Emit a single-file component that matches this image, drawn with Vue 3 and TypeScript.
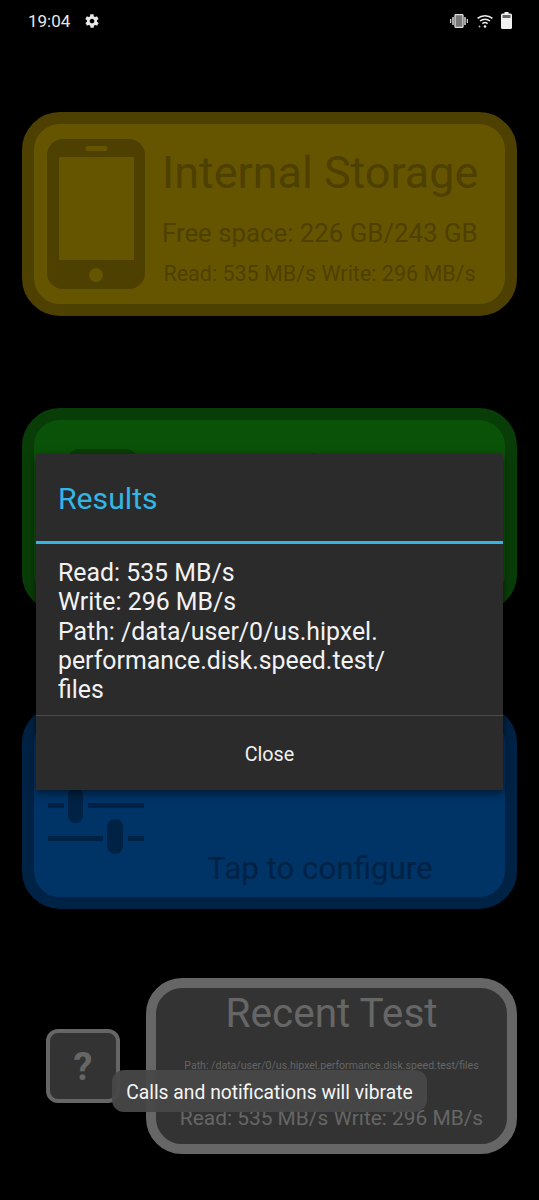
<script setup lang="ts">
const resultLines: string[] = [
  'Read: 535 MB/s',
  'Write: 296 MB/s',
  'Path: /data/user/0/us.hipxel.',
  'performance.disk.speed.test/',
  'files',
]
</script>

<template>
  <div class="page">
    <header class="status">
      <span class="time">19:04</span>
      <svg class="gear" width="16" height="16" viewBox="0 0 24 24"><path fill="#e8e8e8" d="M19.4 13c.1-.3.1-.7.1-1s0-.7-.1-1l2.1-1.6c.2-.1.2-.4.1-.6l-2-3.5c-.1-.2-.4-.3-.6-.2l-2.5 1c-.5-.4-1.1-.7-1.7-1l-.4-2.6c0-.3-.2-.5-.5-.5h-4c-.3 0-.5.2-.5.4l-.4 2.7c-.6.2-1.1.6-1.7 1l-2.5-1c-.2-.1-.5 0-.6.2l-2 3.5c-.1.2-.1.5.1.6L4.600 11c-.1.3-.1.7-.1 1s0 .7.1 1l-2.100 1.600c-.2.1-.2.4-.1.6l2 3.500c.1.2.4.3.6.2l2.500-1c.5.4 1.100.7 1.700 1l.4 2.600c0 .3.2.5.5.5h4c.3 0 .5-.2.5-.4l.4-2.700c.6-.2 1.100-.6 1.700-1l2.500 1c.2.1.5 0 .6-.2l2-3.500c.1-.2.1-.5-.1-.6L19.400 13zM12 15.500c-1.900 0-3.500-1.600-3.500-3.500s1.600-3.500 3.500-3.500 3.500 1.600 3.500 3.500-1.600 3.500-3.500 3.500z"/></svg>
      <span class="spacer"></span>
      <svg class="ic-vib" width="18" height="14" viewBox="0 0 18 14"><path fill="#cfcfcf" d="M0 5h1.300v4H0zM2.200 3h1.600v8H2.200zM14.200 3h1.600v8h-1.600zM16.700 5H18v4h-1.300z"/><rect x="5" y=".6" width="8" height="12.800" rx="1" fill="#777" stroke="#e0e0e0" stroke-width="1.300"/></svg>
      <svg class="ic-wifi" width="16" height="14" viewBox="0 0 16 14"><g fill="none" stroke="#eee" stroke-width="1.500"><path d="M.6 4.400C4.700.7 11.300.7 15.400 4.400"/><path d="M3 7C5.900 4.500 10.100 4.500 13 7"/><path d="M5.400 9.600C6.900 8.400 9.100 8.400 10.600 9.600"/></g><circle cx="8" cy="12.500" r="1.300" fill="#eee"/><circle cx="2.500" cy="12.500" r=".9" fill="#bbb"/></svg>
      <svg class="ic-bat" width="11" height="17" viewBox="0 0 11 17"><path fill="#f0f0f0" d="M3.500 0h4v1.500h2A1.500 1.500 0 0 1 11 3v12.500a1.500 1.500 0 0 1-1.500 1.500h-8A1.500 1.500 0 0 1 0 15.500V3a1.500 1.500 0 0 1 1.500-1.500h2z"/><rect x="1.500" y="3" width="8" height="3" fill="#666"/></svg>
    </header>

    <section class="card yellow">
      <svg class="phone" width="98" height="150" viewBox="0 0 98 150">
        <path fill="#4d4000" fill-rule="evenodd" d="M16 0h66a16 16 0 0 1 16 16v118a16 16 0 0 1-16 16H16a16 16 0 0 1-16-16V16A16 16 0 0 1 16 0zM12 18v103h75V18zM41 7a2.500 2.500 0 0 0 0 5h17a2.500 2.500 0 0 0 0-5zM49 129a7 7 0 1 0 0 14 7 7 0 0 0 0-14z"/>
      </svg>
      <div class="info">
        <h2 class="big">Internal Storage</h2>
        <p class="free">Free space: 226 GB/243 GB</p>
        <p class="speed">Read: 535 MB/s Write: 296 MB/s</p>
      </div>
    </section>

    <section class="card green">
      <div class="sd"></div>
      <div class="info">
        <h2 class="big">External Storage</h2>
      </div>
    </section>

    <section class="card blue">
      <svg class="sliders" width="96" height="100" viewBox="0 0 96 100">
        <g fill="#002244">
          <path d="M0 0h55v5H0zM80 0h16v5H80zM0 33h16v5H0zM40 33h56v5H40zM0 66h55v5H0zM80 66h16v5H80z"/>
          <rect x="59" y="-15" width="16" height="35" rx="8"/>
          <rect x="20" y="18" width="15" height="35" rx="7.500"/>
          <rect x="59" y="49" width="16" height="35" rx="8"/>
        </g>
      </svg>
      <p class="tap">Tap to configure</p>
    </section>

    <div class="bottom">
      <button class="help" type="button">?</button>
      <section class="recent">
        <h2 class="r-title">Recent Test</h2>
        <p class="r-path">Path: /data/user/0/us.hipxel.performance.disk.speed.test/files</p>
        <p class="r-speed">Read: 535 MB/s Write: 296 MB/s</p>
      </section>
    </div>

    <div class="dialog">
      <h1 class="d-title">Results</h1>
      <div class="d-body">
        <div v-for="line in resultLines" :key="line">{{ line }}</div>
      </div>
      <div class="d-action">Close</div>
    </div>

    <div class="toast">Calls and notifications will vibrate</div>
  </div>
</template>

<style>
html, body { margin: 0; background: #000; }
</style>

<style scoped>
.page {
  position: relative;
  width: 539px;
  height: 1200px;
  overflow: hidden;
  background: #000;
  font-family: Roboto, "Liberation Sans", sans-serif;
  display: flex;
  flex-direction: column;
  padding: 0 22px;
  box-sizing: border-box;
}
.status {
  height: 42px;
  margin: 0 -22px 70px;
  padding: 0 27px 0 28px;
  display: flex;
  align-items: center;
}
.time { color: #e8e8e8; font-size: 17px; line-height: 42px; width: 42px; }
.gear { margin-left: 14px; }
.spacer { flex: 1; }
.ic-wifi { margin-left: 9px; }
.ic-bat { margin-left: 8px; margin-top: -1px; }
h1, h2, p { margin: 0; font-weight: 400; }
.card {
  box-sizing: border-box;
  height: 204px;
  border-width: 12px;
  border-style: solid;
  border-radius: 38px;
  display: flex;
  white-space: nowrap;
}
.yellow {
  background: #665500;
  border-color: #4d4000;
  color: #4d4000;
  padding: 15px 0 0 13px;
}
.phone { flex: none; }
.info {
  width: 315px;
  margin-left: 17px;
  text-align: center;
}
.big { font-size: 44.900px; line-height: 50px; margin-top: 9px; }
.free { font-size: 25.800px; line-height: 30px; margin-top: 20px; }
.speed { font-size: 21.500px; line-height: 26px; margin-top: 13px; }
.green {
  margin-top: 92px;
  background: #0b5209;
  border-color: #093d07;
  color: #093d07;
  padding: 18px 0 0 13px;
}
.sd { width: 71px; height: 120px; margin-left: 20px; margin-top: 11px; background: #093d07; border-radius: 12px 12px 0 0; flex: none; margin-right: 4px; }
.green .info { margin-left: 15px; }
.blue {
  margin-top: 93px;
  background: #003366;
  border-color: #002244;
  color: #002244;
  padding: 0 0 0 14px;
}
.sliders { flex: none; overflow: visible; margin-top: 53px; }
.tap { font-size: 31.300px; line-height: 40px; margin: 132px 0 0 61px; width: 230px; text-align: center; }
.bottom {
  display: flex;
  margin-top: 69px;
  align-items: flex-start;
}
.help {
  box-sizing: border-box;
  width: 74px;
  height: 74px;
  margin: 51px 26px 0 24px;
  padding: 0;
  border: 4px solid #666;
  border-radius: 12px;
  background: #333;
  color: #666;
  font: 700 38px/69px Roboto, "Liberation Sans", sans-serif;
  text-align: center;
}
.recent {
  box-sizing: border-box;
  width: 371px;
  height: 176px;
  border: 10px solid #666;
  border-radius: 36px;
  background: #333;
  color: #666;
  text-align: center;
  white-space: nowrap;
}
.r-title { font-size: 40.600px; line-height: 46px; margin-top: 2px; }
.r-path { font-size: 10.570px; line-height: 14px; margin-top: 23px; }
.r-speed { font-size: 20.900px; line-height: 26px; margin-top: 32px; }
.dialog {
  position: absolute;
  left: 36px;
  top: 454px;
  width: 467px;
  height: 336px;
  background: #2b2b2b;
  box-shadow: 0 3px 8px rgba(0, 0, 0, 0.55);
  display: flex;
  flex-direction: column;
}
.d-title {
  box-sizing: border-box;
  height: 90px;
  padding: 0 22px;
  border-bottom: 3px solid #33b5e5;
  color: #33b5e5;
  font-size: 30.200px;
  line-height: 89px;
}
.d-body {
  box-sizing: border-box;
  height: 172px;
  padding: 14px 22px 0;
  color: #f2f2f2;
  font-size: 24.850px;
  line-height: 29.300px;
  border-bottom: 1px solid #4a4a4a;
  flex: none;
}
.d-action {
  flex: 1;
  color: #f0f0f0;
  font-size: 19.800px;
  text-align: center;
  line-height: 78px;
}
.toast {
  position: absolute;
  left: 112px;
  top: 1070px;
  width: 315px;
  height: 42px;
  box-sizing: border-box;
  border-radius: 12px;
  background: rgba(72, 72, 72, 0.95);
  color: #f5f5f5;
  font-size: 19.300px;
  line-height: 45px;
  text-align: center;
  white-space: nowrap;
}
</style>
